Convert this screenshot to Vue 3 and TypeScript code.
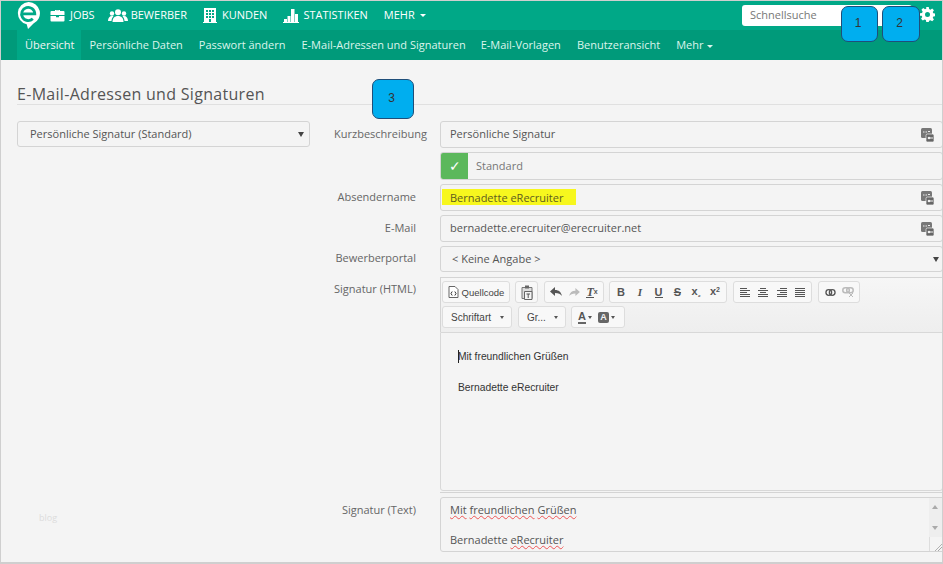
<script setup lang="ts">
const mainNav = [
  { label: 'JOBS', icon: 'job' },
  { label: 'BEWERBER', icon: 'people' },
  { label: 'KUNDEN', icon: 'building' },
  { label: 'STATISTIKEN', icon: 'chart' },
]
const subNav = ['Persönliche Daten', 'Passwort ändern', 'E-Mail-Adressen und Signaturen', 'E-Mail-Vorlagen', 'Benutzeransicht']
const alignIcons = [
  'M0 .5h7M0 2.5h10M0 4.500h7M0 6.500h10M0 8.500h10',
  'M2 .5h6M0 2.500h10M2 4.500h6M0 6.500h10M0 8.500h10',
  'M3 .5h7M0 2.500h10M3 4.500h7M0 6.500h10M0 8.500h10',
  'M0 .5h10M0 2.500h10M0 4.500h10M0 6.500h10M0 8.500h10',
]
</script>

<template>
  <div class="page">
    <header class="top">
      <svg class="logo" width="23" height="27" viewBox="0 0 23 27">
        <path d="M11.500 0a11.300 11.300 0 0 1 5 21.500L11 27l-1.300-4.700A11.300 11.300 0 0 1 11.500 0z" fill="#fff" />
        <path d="M4.800 11.800h13a6.600 6.600 0 1 0-2 4.900" fill="none" stroke="#00a887" stroke-width="2.800" />
      </svg>
      <nav class="main-nav">
        <a v-for="n in mainNav" :key="n.label" class="main-link">
          <svg v-if="n.icon === 'job'" width="15" height="13" viewBox="0 0 15 13"><path fill="#fff" d="M5 2V1h5v1h3.500a1 1 0 0 1 1 1v3H.5V3a1 1 0 0 1 1-1zM6 2h3V1.700H6zM.5 7h5.500v1.300h3V7h5.500v4.500a1 1 0 0 1-1 1h-12a1 1 0 0 1-1-1z"/></svg>
          <svg v-else-if="n.icon === 'people'" width="20" height="13" viewBox="0 0 20 13"><g fill="#fff"><circle cx="10" cy="3.200" r="3"/><path d="M4.500 13c0-4 2.200-6 5.500-6s5.500 2 5.500 6z"/><circle cx="4" cy="4.500" r="2.200"/><circle cx="16" cy="4.500" r="2.200"/><path d="M0 12c0-3 1.500-5 4-5 .6 0 1.100.1 1.500.3C4.300 8.400 3.600 10 3.500 12zM20 12c0-3-1.500-5-4-5-.6 0-1.100.1-1.500.3 1.200 1.100 1.900 2.700 2 4.700z"/></g></svg>
          <svg v-else-if="n.icon === 'building'" width="14" height="15" viewBox="0 0 14 15"><path fill="#fff" fill-rule="evenodd" d="M1 0h12v14h1v1H0v-1h1zM3 2v2h2V2zm3 0v2h2V2zm3 0v2h2V2zM3 5v2h2V5zm3 0v2h2V5zm3 0v2h2V5zM3 8v2h2V8zm3 0v2h2V8zm3 0v2h2V8zm-3 3v3h2v-3z"/></svg>
          <svg v-else width="16" height="15" viewBox="0 0 16 15"><path fill="#fff" d="M0 14h16v1H0zM1 11h3v3H1zM4.500 8h3v6h-3zM8 1h3.500v13H8zM12 6h3v8h-3z"/></svg>
          <span>{{ n.label }}</span>
        </a>
        <a class="main-link more">MEHR <i class="caret"></i></a>
      </nav>
      <div class="search">Schnellsuche</div>
      <svg class="gear" width="15" height="15" viewBox="0 0 24 24"><path fill="#fff" fill-rule="evenodd" d="M10 0h4l.6 3.300 2.100.9L19.500 2.300l2.800 2.800-1.900 2.800.9 2.100 3.300.6v4l-3.300.6-.9 2.100 1.900 2.800-2.800 2.800-2.800-1.900-2.100.9L14 24h-4l-.6-3.300-2.100-.9-2.800 1.900-2.800-2.800 1.900-2.800-.9-2.100L0 14v-4l3.300-.6.9-2.100L2.300 4.500l2.800-2.800L7.900 3.600l2.100-.9zM12 8a4 4 0 1 0 0 8 4 4 0 0 0 0-8z"/></svg>
    </header>

    <nav class="sub">
      <a class="sub-link active">Übersicht</a>
      <a v-for="s in subNav" :key="s" class="sub-link">{{ s }}</a>
      <a class="sub-link">Mehr <i class="caret"></i></a>
    </nav>

    <main class="content">
      <h1 class="title">E-Mail-Adressen und Signaturen</h1>
      <div class="columns">
        <aside class="left">
          <div class="field select-left">Persönliche Signatur (Standard)<i class="tri"></i></div>
          <div class="blog">blog</div>
        </aside>
        <section class="form">
          <div class="row">
            <label class="lbl wide">Kurzbeschreibung</label>
            <div class="field">Persönliche Signatur</div>
          </div>
          <div class="row">
            <label class="lbl"></label>
            <div class="field check-field"><span class="check">✓</span><span class="check-text">Standard</span></div>
          </div>
          <div class="row">
            <label class="lbl">Absendername</label>
            <div class="field"><span class="marker">Bernadette eRecruiter</span></div>
          </div>
          <div class="row">
            <label class="lbl">E-Mail</label>
            <div class="field">bernadette.erecruiter@erecruiter.net</div>
          </div>
          <div class="row">
            <label class="lbl">Bewerberportal</label>
            <div class="field portal">&lt; Keine Angabe &gt;<i class="tri"></i></div>
          </div>
          <div class="row">
            <label class="lbl">Signatur (HTML)</label>
            <div class="editor">
              <div class="toolbar">
                <div class="tb-line">
                  <div class="grp"><span class="btn src"><svg width="11" height="12" viewBox="0 0 11 12"><path d="M1 .5h6l3 3v8H1z" fill="#fff" stroke="#666"/><path d="M4.200 5.500 3 7.500l1.200 2M6.800 5.500 8 7.500l-1.200 2" fill="none" stroke="#333"/></svg>Quellcode</span></div>
                  <div class="grp"><span class="btn ic"><svg width="12" height="15" viewBox="0 0 12 15"><path d="M1 2.500h10v11H1z" fill="#ddd" stroke="#777"/><path d="M4 .5h4v3H4z" fill="#666"/><path d="M3.500 6.500h7.500v8H3.500z" fill="#f4f4f4" stroke="#666"/><path d="M5.500 9h3.500M7.200 9v4" stroke="#555"/></svg></span></div>
                  <div class="grp push"><span class="btn g"><svg width="12" height="10" viewBox="0 0 12 10"><path d="M5 0v3c4 0 6 2 7 6-1.500-2-3.500-3-7-3v3L0 4.500z" fill="#555"/></svg></span><span class="btn g"><svg width="11" height="9" viewBox="0 0 12 10"><path d="M7 0v3C3 3 1 5 0 9c1.500-2 3.500-3 7-3v3l5-4.500z" fill="#bbb"/></svg></span><span class="btn g tx tclear"><span class="under">T</span><small>x</small></span></div>
                  <div class="grp fmt"><span class="btn g tx"><b>B</b></span><span class="btn g tx"><b class="serif-i">I</b></span><span class="btn g tx"><b class="under">U</b></span><span class="btn g tx"><b class="strike">S</b></span><span class="btn g tx"><b>x<small class="low">₂</small></b></span><span class="btn g tx"><b>x<small class="high">2</small></b></span></div>
                  <div class="grp push"><span v-for="(d, i) in alignIcons" :key="i" class="btn g al-btn"><svg width="10" height="9" viewBox="0 0 10 9"><path :d="d" stroke="#555" fill="none"/></svg></span></div>
                  <div class="grp push"><span class="btn g"><svg width="11" height="7" viewBox="0 0 12 8"><rect x=".8" y=".8" width="6.500" height="6.400" rx="3.200" fill="none" stroke="#555" stroke-width="1.500"/><rect x="4.700" y=".8" width="6.500" height="6.400" rx="3.200" fill="none" stroke="#555" stroke-width="1.500"/></svg></span><span class="btn g"><svg width="12" height="10" viewBox="0 0 12 10"><rect x=".8" y=".8" width="6.500" height="5" rx="2.500" fill="none" stroke="#bbb" stroke-width="1.500"/><rect x="4.700" y=".8" width="6.500" height="5" rx="2.500" fill="none" stroke="#bbb" stroke-width="1.500"/><path d="M7 6l4 4M11 6l-4 4" stroke="#bbb"/></svg></span></div>
                </div>
                <div class="tb-line">
                  <div class="grp combo font">Schriftart<i class="mini"></i></div>
                  <div class="grp combo size">Gr...<i class="mini"></i></div>
                  <div class="grp colors">
                    <span class="color-a">A</span><i class="mini small"></i>
                    <span class="color-b">A</span><i class="mini small"></i>
                  </div>
                </div>
              </div>
              <div class="edit-body">
                <p><span class="cursor"></span>Mit freundlichen Grüßen</p>
                <p>Bernadette eRecruiter</p>
              </div>
            </div>
          </div>
          <div class="row">
            <label class="lbl">Signatur (Text)</label>
            <div class="textarea">
              <div class="ta-text">
                <div><span class="sq">Mit</span> <span class="sq">freundlichen</span> <span class="sq">Grüßen</span></div>
                <div class="ta-second">Bernadette <span class="sq">eRecruiter</span></div>
              </div>
              <div class="scroll">
                <div class="track"><i class="up"></i><i class="down"></i></div>
                <div class="grip"></div>
              </div>
            </div>
          </div>
        </section>
      </div>
    </main>

    <div class="badge b1">1</div>
    <div class="badge b2">2</div>
    <div class="badge b3">3</div>
    <svg v-for="y in [128, 191, 222]" :key="y" class="key" :style="{ top: y + 'px' }" width="13" height="14" viewBox="0 0 13 14">
      <rect x="0" y="0" width="11" height="10" rx="1.500" fill="#777" />
      <rect x="5" y="6" width="8" height="8" rx="1.500" fill="#666" stroke="#f4f4f4" stroke-width=".7" />
      <path d="M2 4h1.500M4.500 4H6M7 3.500h2" stroke="#eee" />
      <circle cx="8" cy="10" r="1.300" fill="#eee" /><path d="M9 10h3" stroke="#eee" />
    </svg>
  </div>
</template>

<style>
html, body { margin: 0; background: #f4f4f4; }
</style>

<style scoped>
.page {
  position: relative;
  width: 943px;
  height: 564px;
  box-sizing: border-box;
  overflow: hidden;
  background: #f4f4f4;
  font-family: "Open Sans", sans-serif;
  font-size: 11px;
  color: #555;
}
.page::after {
  content: "";
  position: absolute;
  inset: 0;
  border: solid #cfcfcf;
  border-width: 1px 1px 2px 1px;
  pointer-events: none;
}
.top {
  display: flex;
  align-items: center;
  height: 30px;
  box-sizing: border-box;
  padding-left: 17px;
  background: #00a887;
}
.logo { flex: none; margin-top: 1px; }
.main-nav { display: flex; align-items: center; margin-left: 10px; }
.main-link {
  display: flex;
  align-items: center;
  gap: 4px;
  margin-right: 16px;
  color: #fff;
  font-size: 11px;
  line-height: 28px;
  white-space: nowrap;
}
.main-link:nth-child(1) { gap: 5px; margin-right: 13px; }
.main-link:nth-child(2) { gap: 3px; }
.main-link:nth-child(3) { gap: 5px; margin-right: 16px; }
.main-link:nth-child(4) { gap: 4px; }
.caret {
  display: inline-block;
  width: 0;
  height: 0;
  margin-left: 1px;
  vertical-align: middle;
  border-left: 3.500px solid transparent;
  border-right: 3.500px solid transparent;
  border-top: 3.500px solid currentColor;
}
.search {
  box-sizing: border-box;
  width: 170px;
  height: 21px;
  margin-left: auto;
  padding: 1px 8px;
  background: #fff;
  border-radius: 3px;
  color: #777;
  font-size: 11px;
  line-height: 17px;
}
.gear { margin: -1px 8px 0 8px; }
.sub {
  display: flex;
  height: 30px;
  padding-left: 17px;
  background: #009a7a;
}
.sub-link {
  padding: 0 8px;
  color: #dcf5ec;
  font-size: 11px;
  line-height: 30px;
  white-space: nowrap;
}
.sub-link:nth-child(4) { padding-right: 7px; }
.sub-link.active { padding-right: 7px; background: #00a887; color: #f4f4f4; }
.content { padding: 0 0 0 17px; }
.title {
  margin: 0 0 16px;
  height: 45px;
  box-sizing: border-box;
  padding-top: 23px;
  border-bottom: 1px solid #e0e0e0;
  color: #555;
  font-size: 16px;
  font-weight: 400;
  line-height: 22px;
  letter-spacing: .3px;
}
.columns { display: flex; }
.left { width: 293px; flex: none; }
.field {
  position: relative;
  box-sizing: border-box;
  flex: 1;
  height: 100%;
  padding: 0 9px;
  background: #f4f4f4;
  border: 1px solid #d4d4d4;
  border-radius: 3px;
  line-height: 24px;
  color: #555;
  font-size: 11px;
}
.select-left { height: 26px; padding-left: 12px; }
.select-left .tri { right: 5px; }
.tri {
  position: absolute;
  right: 3px;
  top: 10px;
  width: 0;
  height: 0;
  border-left: 3px solid transparent;
  border-right: 3px solid transparent;
  border-top: 5px solid #444;
}
.blog { margin: 364px 0 0 22px; color: #dcdcdc; font-size: 9px; }
.form { display: flex; flex: 1; flex-direction: column; margin-left: 10px; }
.row { display: flex; height: 27px; margin-bottom: 4px; }
.row:nth-child(2) { height: 28px; }
.row:nth-child(5) { height: 26px; margin-bottom: 5px; }
.row:nth-child(6) { height: 216px; margin-bottom: 4px; }
.row:nth-child(7) { height: 55px; margin: 0; }
.lbl {
  flex: none;
  width: 96px;
  margin-right: 24px;
  text-align: right;
  color: #666;
  font-size: 11px;
  line-height: 25px;
}
.row:nth-child(5) .lbl, .row:nth-child(6) .lbl { line-height: 24px; }
.lbl.wide { white-space: nowrap; width: 107px; margin-right: 13px; }
.check-field { display: flex; padding: 0; overflow: hidden; }
.check {
  width: 27px;
  background: #5cb85c;
  color: #fff;
  text-align: center;
  font-size: 14px;
  line-height: 26px;
}
.check-text { margin-left: 8px; color: #777; line-height: 26px; }
.marker {
  display: inline-block;
  margin: 4px 0 0 -8px;
  padding: 0 13px 0 8px;
  height: 16px;
  line-height: 17px;
  background: #f7f71e;
  color: #5f5d20;
  vertical-align: top;
}
.portal { padding-left: 11px; }
.editor {
  flex: 1;
  box-sizing: border-box;
  display: flex;
  flex-direction: column;
  border-bottom: 1px solid #d4d4d4;
  background: #f4f4f4;
  font-family: "Liberation Sans", sans-serif;
}
.toolbar {
  height: 55px;
  flex: none;
  box-sizing: border-box;
  padding: 3px 0 0 1px;
  border: 1px solid #d4d4d4;
  border-bottom: 0;
  background: linear-gradient(#f6f6f6, #eee);
}
.tb-line { display: flex; height: 22px; gap: 5px; margin-bottom: 3px; }
.grp {
  display: flex;
  align-items: center;
  box-sizing: border-box;
  height: 22px;
  padding: 0 2px;
  border: 1px solid #ddd;
  border-radius: 3px;
  background: #f8f8f8;
  color: #444;
  font-size: 9.500px;
}
.push { margin-left: 1px; }
.btn { display: flex; align-items: center; justify-content: center; }
.src { gap: 3px; width: 62px; }
.ic { width: 17px; }
.g { width: 18px; height: 20px; }
.fmt { padding: 0 2px; width: 118px; margin-left: 0; justify-content: space-between; }
.al-btn { width: 18.250px; }
.tx { font-family: "Liberation Sans", sans-serif; font-size: 11px; color: #555; line-height: 12px; }
.tx small { font-size: 7px; }
.tclear { font-weight: 700; font-style: italic; font-family: "Liberation Serif", serif; font-size: 12px; align-items: flex-end; padding-bottom: 4px; box-sizing: border-box; }
.tclear small { font-family: "Liberation Sans", sans-serif; font-style: normal; }
.serif-i { font-family: "Liberation Serif", serif; font-style: italic; }
.under { border-bottom: 1px solid #555; line-height: 10px; }
.strike { text-decoration: line-through; }
.low { position: relative; top: 2px; font-size: 6px; }
.high { position: relative; top: -3px; font-size: 6px; }
.combo { position: relative; padding-left: 8px; font-size: 10px; }
.font { width: 70px; }
.size { width: 48px; margin-left: 1px; }
.mini {
  position: absolute;
  right: 7px;
  top: 9px;
  width: 0;
  height: 0;
  border-left: 2.500px solid transparent;
  border-right: 2.500px solid transparent;
  border-top: 3px solid #555;
}
.mini.small { position: static; margin: 0 4px 0 2px; }
.colors { width: 54px; padding-left: 6px; }
.color-a { font-size: 11px; font-weight: 700; border-bottom: 2px solid #666; color: #555; line-height: 11px; }
.color-b { width: 11px; height: 11px; margin-left: 2px; border-radius: 2px; background: #666; color: #f4f4f4; font-size: 9px; font-weight: 700; text-align: center; line-height: 11px; }
.edit-body {
  box-sizing: border-box;
  height: 159px;
  flex: none;
  padding: 18px 0 0 17px;
  border: 1px solid #d8d8d8;
  border-radius: 0 0 3px 3px;
  color: #333;
  font-size: 10.300px;
  line-height: 12px;
}
.edit-body p { position: relative; margin: 0 0 19px; }
.cursor { position: absolute; left: 0; top: -1px; width: 1px; height: 13px; background: #222; }
.textarea {
  flex: 1;
  display: flex;
  box-sizing: border-box;
  background: #f4f4f4;
  border: 1px solid #d4d4d4;
  border-radius: 3px 0 0 3px;
  overflow: hidden;
}
.ta-text { flex: 1; padding: 3px 9px; line-height: 18px; font-size: 11px; color: #555; }
.ta-second { margin-top: 12px; }
.sq { text-decoration: underline wavy #e55 1px; text-underline-offset: 1px; }
.scroll { width: 13px; display: flex; flex-direction: column; flex: none; margin-right: 0; }
.track { position: relative; height: 39px; background: #eee; }
.up, .down { position: absolute; left: 3px; width: 0; height: 0; border-left: 3.500px solid transparent; border-right: 3.500px solid transparent; }
.up { top: 7px; border-bottom: 4px solid #aaa; }
.down { bottom: 7px; border-top: 4px solid #aaa; }
.grip { flex: 1; background: linear-gradient(135deg, #f4f4f4 70%, #999 72%, #f4f4f4 76%, #f4f4f4 82%, #999 84%, #f4f4f4 88%); border-left: 1px solid #ddd; }
.badge {
  position: absolute;
  display: flex;
  align-items: center;
  justify-content: center;
  box-sizing: border-box;
  padding: 0 3px 2px 0;
  background: #00aeef;
  border: 1px solid #1f4e79;
  border-radius: 7px;
  color: #333;
  font-family: "Liberation Sans", sans-serif;
  font-size: 12px;
  z-index: 2;
}
.b1 { left: 841px; top: 6px; width: 37px; height: 36px; }
.b2 { left: 882px; top: 6px; width: 38px; height: 36px; }
.b3 { left: 372px; top: 79px; width: 42px; height: 40px; }
.key { position: absolute; left: 921px; }
</style>
